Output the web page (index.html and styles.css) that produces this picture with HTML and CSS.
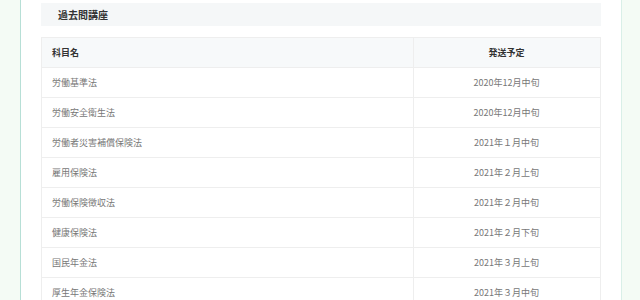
FILE: index.html
```html
<!DOCTYPE html>
<html lang="ja">
<head>
<meta charset="utf-8">
<link rel="stylesheet" href="styles.css">
</head>
<body>
<div class="page">
  <div class="card">
    <h2 class="title">過去問講座</h2>
    <table class="schedule">
      <thead>
        <tr><th class="subject">科目名</th><th class="date">発送予定</th></tr>
      </thead>
      <tbody>
        <tr><td class="subject">労働基準法</td><td class="date">2020年12月中旬</td></tr>
        <tr><td class="subject">労働安全衛生法</td><td class="date">2020年12月中旬</td></tr>
        <tr><td class="subject">労働者災害補償保険法</td><td class="date">2021年１月中旬</td></tr>
        <tr><td class="subject">雇用保険法</td><td class="date">2021年２月上旬</td></tr>
        <tr><td class="subject">労働保険徴収法</td><td class="date">2021年２月中旬</td></tr>
        <tr><td class="subject">健康保険法</td><td class="date">2021年２月下旬</td></tr>
        <tr><td class="subject">国民年金法</td><td class="date">2021年３月上旬</td></tr>
        <tr><td class="subject">厚生年金保険法</td><td class="date">2021年３月中旬</td></tr>
      </tbody>
    </table>
  </div>
</div>
</body>
</html>
```

FILE: styles.css
```css
html, body {
  margin: 0;
  padding: 0;
  background: #f4fbf5;
  font-family: "Noto Sans CJK JP", "Noto Sans", sans-serif;
  overflow: hidden;
}
.page {
  padding: 0 18px 0 20px;
}
.card {
  background: #ffffff;
  border-left: 1px solid #b7dfd6;
  border-right: 1px solid #d9efe8;
  padding: 3px 20px 0 20px;
  height: 320px;
}
.title {
  margin: 0;
  height: 23px;
  background: #f5f7f8;
  font-size: 10px;
  font-weight: 700;
  color: #333;
  line-height: 23px;
  padding-left: 17px;
}
.schedule {
  margin-top: 11px;
  width: 100%;
  border-collapse: collapse;
  font-size: 9px;
  color: #777;
}
.schedule th, .schedule td {
  height: 29px;
  padding: 0 11px 0 10px;
  border: 1px solid #eeeeee;
  line-height: 1;
}
.schedule th {
  background: #f7f9fa;
  color: #333;
  font-weight: 700;
}
.schedule .subject {
  text-align: left;
  width: 350px;
}
.schedule .date {
  text-align: center;
}
```
